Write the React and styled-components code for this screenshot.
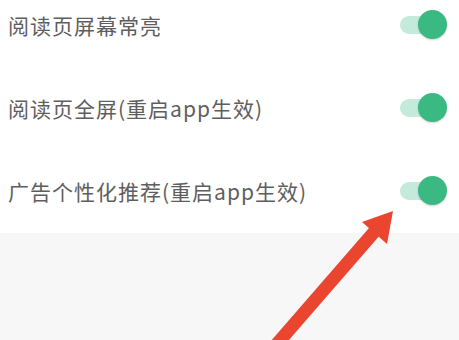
import React from "react";
import styled, { createGlobalStyle } from "styled-components";

const Global = createGlobalStyle`
  html, body { margin: 0; padding: 0; background: #f7f7f7; }
  body { width: 459px; height: 340px; overflow: hidden; }
`;

const Page = styled.div`
  position: relative;
  width: 459px;
  height: 340px;
  background: #f7f7f7;
  font-family: "Noto Sans CJK SC", "Noto Sans", sans-serif;
`;

const Panel = styled.div`
  background: #ffffff;
  display: flex;
  flex-direction: column;
  gap: 50px;
  padding: 8px 12px 26px 8px;
`;

const Row = styled.div`
  height: 33px;
  display: flex;
  align-items: center;
  justify-content: space-between;
`;

const Label = styled.span`
  font-size: 21px;
  color: #5e5e5e;
  letter-spacing: 1px;
  white-space: nowrap;
`;

const Track = styled.div`
  position: relative;
  width: 47px;
  height: 29px;
  display: flex;
  align-items: center;
`;

const Rail = styled.div`
  width: 40px;
  height: 18px;
  border-radius: 9px;
  background: #c4eadb;
`;

const Thumb = styled.div`
  position: absolute;
  right: 0;
  top: 0;
  width: 29px;
  height: 29px;
  border-radius: 50%;
  background: #3bb983;
  box-shadow: 0 1px 2px rgba(0, 0, 0, 0.18);
`;

const ArrowLayer = styled.svg`
  position: absolute;
  left: 0;
  top: 0;
  pointer-events: none;
`;

const Switch = () => (
  <Track>
    <Rail />
    <Thumb />
  </Track>
);

const items = ["阅读页屏幕常亮", "阅读页全屏(重启app生效)", "广告个性化推荐(重启app生效)"];

export default function App() {
  return (
    <Page>
      <Global />
      <Panel>
        {items.map((t) => (
          <Row key={t}>
            <Label>{t}</Label>
            <Switch />
          </Row>
        ))}
      </Panel>
      <ArrowLayer width="459" height="340" viewBox="0 0 459 340">
        <line x1="276" y1="345" x2="375" y2="231" stroke="#e9452f" strokeWidth="13" />
        <polygon points="393,211 362,222 387,244" fill="#e9452f" />
      </ArrowLayer>
    </Page>
  );
}
